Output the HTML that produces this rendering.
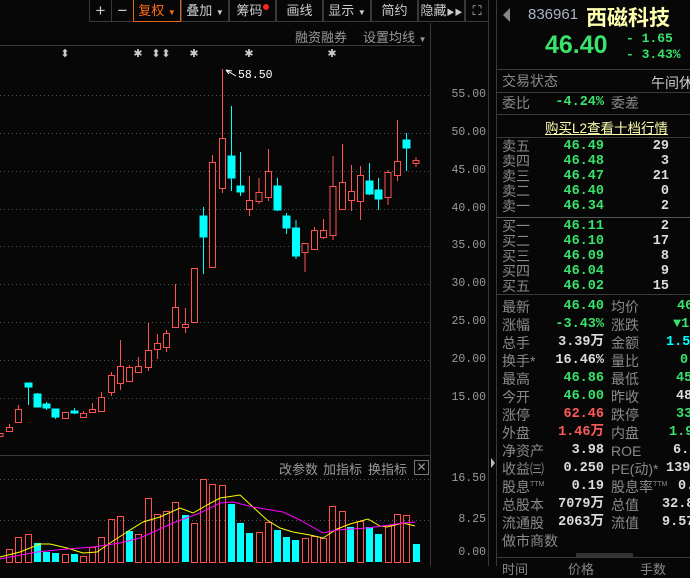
<!DOCTYPE html>
<html><head><meta charset="utf-8"><style>
*{margin:0;padding:0;box-sizing:border-box}
body{width:690px;height:566px;background:#070707;overflow:hidden;position:relative;font-family:"Liberation Sans","Noto Sans CJK SC",sans-serif;color:#bbb}
.a{position:absolute;white-space:nowrap}
.tb{position:absolute;top:0;height:22px;border:1px solid #3a3a3a;border-top:none;color:#ccc;font-size:13px;line-height:21px;text-align:center;white-space:nowrap;overflow:hidden}
.lb{position:absolute;left:502px;font-size:14px;color:#8a8a8a;line-height:16px;white-space:nowrap}
.v{position:absolute;font-size:13.5px;font-weight:bold;line-height:16px;text-align:right;font-family:"Liberation Mono","Noto Sans CJK SC",monospace;white-space:nowrap}
.g{color:#39e26a}.r{color:#ff5a5a}.w{color:#ddd}.c{color:#00ffff}
.ax{position:absolute;left:436px;width:50px;text-align:right;font-size:11.5px;color:#9a9a9a;font-family:"Liberation Mono",monospace;line-height:12px}
sup{font-size:7px;line-height:0;vertical-align:6px}
</style></head><body>
<div class="tb" style="left:89px;width:23px;font-size:17px">+</div>
<div class="tb" style="left:111px;width:23px;font-size:17px">−</div>
<div class="tb" style="left:133px;width:48px;border:1px solid #e8650f;border-top:none;color:#ff6a1a">复权 <span style="font-size:8px">▼</span></div>
<div class="tb" style="left:181px;width:48px">叠加 <span style="font-size:8px">▼</span></div>
<div class="tb" style="left:229px;width:47px">筹码<span style="display:inline-block;width:6px;height:6px;border-radius:3px;background:#f22;vertical-align:top;margin-top:4px"></span></div>
<div class="tb" style="left:276px;width:47px">画线</div>
<div class="tb" style="left:323px;width:48px">显示 <span style="font-size:8px">▼</span></div>
<div class="tb" style="left:371px;width:47px">简约</div>
<div class="tb" style="left:418px;width:47px">隐藏<span style="font-size:8px">▶▶</span></div>
<div class="tb" style="left:465px;width:24px;font-size:13px">⛶</div>
<div class="a" style="left:295px;top:27px;font-size:13px;color:#999">融资融券</div>
<div class="a" style="left:363px;top:27px;font-size:13px;color:#999">设置均线 <span style="font-size:8px">▼</span></div>
<div class="a" style="left:279px;top:459px;font-size:13px;color:#999">改参数</div>
<div class="a" style="left:323px;top:459px;font-size:13px;color:#999">加指标</div>
<div class="a" style="left:368px;top:459px;font-size:13px;color:#999">换指标</div>
<div class="a" style="left:414px;top:460px;width:15px;height:15px;border:1px solid #777;color:#999;font-size:12px;line-height:13px;text-align:center">✕</div>
<div class="ax" style="top:89px">55.00</div><div class="ax" style="top:127px">50.00</div><div class="ax" style="top:165px">45.00</div><div class="ax" style="top:203px">40.00</div><div class="ax" style="top:240px">35.00</div><div class="ax" style="top:278px">30.00</div><div class="ax" style="top:316px">25.00</div><div class="ax" style="top:354px">20.00</div><div class="ax" style="top:392px">15.00</div>
<div class="ax" style="top:473px">16.50</div><div class="ax" style="top:514px">8.25</div><div class="ax" style="top:547px">0.00</div>
<svg class="a" style="left:0;top:0" width="497" height="566">
<g stroke="#3a3a3a" fill="none">
<line x1="0" y1="45.5" x2="421" y2="45.5"/><line x1="430.5" y1="23" x2="430.5" y2="566"/>
<line x1="488.5" y1="0" x2="488.5" y2="566"/><line x1="0" y1="455.5" x2="430" y2="455.5"/>
</g>
<polygon points="491,458 495,463 491,468" fill="#bbb"/>
<g stroke="#555" stroke-dasharray="1,3"><line x1="0" y1="95.5" x2="430" y2="95.5"/><line x1="0" y1="133.5" x2="430" y2="133.5"/><line x1="0" y1="171.5" x2="430" y2="171.5"/><line x1="0" y1="209.5" x2="430" y2="209.5"/><line x1="0" y1="246.5" x2="430" y2="246.5"/><line x1="0" y1="284.5" x2="430" y2="284.5"/><line x1="0" y1="322.5" x2="430" y2="322.5"/><line x1="0" y1="360.5" x2="430" y2="360.5"/><line x1="0" y1="398.5" x2="430" y2="398.5"/><line x1="0" y1="479.5" x2="430" y2="479.5"/><line x1="0" y1="520.5" x2="430" y2="520.5"/></g>
<g fill="#ccc" font-size="11" font-family="Liberation Sans,sans-serif" text-anchor="middle"><text x="65" y="57">⬍</text><text x="138" y="57">✱</text><text x="156" y="57">⬍</text><text x="166" y="57">⬍</text><text x="194" y="57">✱</text><text x="249" y="57">✱</text><text x="332" y="57">✱</text></g>
<path d="M226,70 L232,71 M226,70 L229,74 M226,70 L236,76" stroke="#fff" fill="none"/>
<text x="238" y="78" fill="#fff" font-size="11.5" font-family="Liberation Mono,monospace">58.50</text>
<g stroke="#ff5050" fill="#070707">
<line x1="1" y1="433" x2="1" y2="436"/><rect x="-2" y="433.5" width="5" height="3"/>
<line x1="9.5" y1="424" x2="9.5" y2="431"/><rect x="6.5" y="427.5" width="6" height="4"/>
<line x1="18.5" y1="405" x2="18.5" y2="423"/><rect x="15.5" y="409.5" width="6" height="13"/>
<rect x="62.5" y="412.5" width="6" height="6"/>
<line x1="83.5" y1="411" x2="83.5" y2="417"/><rect x="80.5" y="413.5" width="6" height="4"/>
<line x1="92.5" y1="403" x2="92.5" y2="412"/><rect x="89.5" y="409.5" width="6" height="3"/>
<line x1="101.5" y1="392" x2="101.5" y2="411"/><rect x="98.5" y="397.5" width="6" height="14"/>
<line x1="111.5" y1="372" x2="111.5" y2="396"/><rect x="108.5" y="375.5" width="6" height="17"/>
<line x1="120.5" y1="340" x2="120.5" y2="390"/><rect x="117.5" y="366.5" width="6" height="17"/>
<line x1="129.5" y1="365" x2="129.5" y2="381"/><rect x="126.5" y="367.5" width="6" height="14"/>
<line x1="138.5" y1="357" x2="138.5" y2="372"/><rect x="135.5" y="366.5" width="6" height="6"/>
<line x1="148.5" y1="323" x2="148.5" y2="371"/><rect x="145.5" y="350.5" width="6" height="17"/>
<line x1="157.5" y1="334" x2="157.5" y2="359"/><rect x="154.5" y="343.5" width="6" height="6"/>
<line x1="166.5" y1="330" x2="166.5" y2="352"/><rect x="163.5" y="333.5" width="6" height="14"/>
<line x1="175.5" y1="284" x2="175.5" y2="327"/><rect x="172.5" y="307.5" width="6" height="20"/>
<line x1="185.5" y1="308" x2="185.5" y2="333"/><rect x="182.5" y="324.5" width="6" height="3"/>
<rect x="191.5" y="268.5" width="6" height="54"/>
<line x1="212.5" y1="155" x2="212.5" y2="267"/><rect x="209.5" y="162.5" width="6" height="105"/>
<line x1="222.5" y1="69" x2="222.5" y2="193"/><rect x="219.5" y="138.5" width="6" height="50"/>
<line x1="249.5" y1="176" x2="249.5" y2="216"/><rect x="246.5" y="200.5" width="6" height="9"/>
<line x1="259" y1="178" x2="259" y2="204"/><rect x="256" y="192.5" width="6" height="9"/>
<line x1="268.5" y1="149" x2="268.5" y2="201"/><rect x="265.5" y="171.5" width="6" height="26"/>
<line x1="305" y1="243" x2="305" y2="272"/><rect x="302" y="243.5" width="6" height="9"/>
<line x1="314.5" y1="227" x2="314.5" y2="249"/><rect x="311.5" y="230.5" width="6" height="19"/>
<line x1="323.5" y1="219" x2="323.5" y2="239"/><rect x="320.5" y="230.5" width="6" height="7"/>
<line x1="333" y1="156" x2="333" y2="240"/><rect x="330" y="186.5" width="6" height="49"/>
<line x1="342.5" y1="144" x2="342.5" y2="209"/><rect x="339.5" y="182.5" width="6" height="27"/>
<line x1="351.5" y1="165" x2="351.5" y2="211"/><rect x="348.5" y="191.5" width="6" height="9"/>
<line x1="360.5" y1="166" x2="360.5" y2="220"/><rect x="357.5" y="175.5" width="6" height="26"/>
<line x1="388" y1="170" x2="388" y2="205"/><rect x="385" y="172.5" width="6" height="25"/>
<line x1="397.5" y1="120" x2="397.5" y2="181"/><rect x="394.5" y="161.5" width="6" height="14"/>
<line x1="416" y1="157" x2="416" y2="167"/><rect x="413" y="160.5" width="6" height="3"/>
</g>
<g stroke="#00ffff" fill="#00ffff">
<line x1="28.5" y1="383" x2="28.5" y2="405"/><rect x="25" y="383" width="7" height="4"/>
<line x1="37.5" y1="393" x2="37.5" y2="407"/><rect x="34" y="394" width="7" height="13"/>
<line x1="46.5" y1="402" x2="46.5" y2="410"/><rect x="43" y="404" width="7" height="4"/>
<line x1="55.5" y1="409" x2="55.5" y2="419"/><rect x="52" y="409" width="7" height="8"/>
<line x1="74.5" y1="408" x2="74.5" y2="414"/><rect x="71" y="411" width="7" height="2"/>
<line x1="203.5" y1="207" x2="203.5" y2="274"/><rect x="200" y="216" width="7" height="21"/>
<line x1="231.5" y1="106" x2="231.5" y2="191"/><rect x="228" y="156" width="7" height="22"/>
<line x1="240.5" y1="152" x2="240.5" y2="196"/><rect x="237" y="186" width="7" height="6"/>
<line x1="277.5" y1="178" x2="277.5" y2="211"/><rect x="274" y="186" width="7" height="24"/>
<line x1="286.5" y1="213" x2="286.5" y2="234"/><rect x="283" y="216" width="7" height="12"/>
<line x1="296" y1="220" x2="296" y2="259"/><rect x="292.5" y="228" width="7" height="28"/>
<line x1="369.5" y1="163" x2="369.5" y2="195"/><rect x="366" y="181" width="7" height="13"/>
<line x1="378.5" y1="178" x2="378.5" y2="210"/><rect x="375" y="190" width="7" height="9"/>
<line x1="406.5" y1="133" x2="406.5" y2="171"/><rect x="403" y="140" width="7" height="8"/>
</g>
<g stroke="#ff5050" fill="none">
<rect x="6.5" y="549.5" width="6" height="13"/><rect x="15.5" y="537.5" width="6" height="25"/><rect x="25.5" y="534.5" width="6" height="28"/>
<rect x="62.5" y="554.5" width="6" height="8"/><rect x="80.5" y="556.5" width="6" height="6"/><rect x="89.5" y="547.5" width="6" height="15"/>
<rect x="98.5" y="537.5" width="6" height="25"/><rect x="108.5" y="519.5" width="6" height="43"/><rect x="117.5" y="516.5" width="6" height="46"/>
<rect x="135.5" y="534.5" width="6" height="28"/><rect x="145.5" y="498.5" width="6" height="64"/><rect x="154.5" y="514.5" width="6" height="48"/>
<rect x="163.5" y="511.5" width="6" height="51"/><rect x="172.5" y="502.5" width="6" height="60"/><rect x="191.5" y="523.5" width="6" height="39"/>
<rect x="200.5" y="479.5" width="6" height="83"/><rect x="209.5" y="484.5" width="6" height="78"/><rect x="219.5" y="485.5" width="6" height="77"/>
<rect x="256.5" y="532.5" width="6" height="30"/><rect x="265.5" y="522.5" width="6" height="40"/>
<rect x="302.5" y="538.5" width="6" height="24"/><rect x="311.5" y="536.5" width="6" height="26"/><rect x="320.5" y="538.5" width="6" height="24"/>
<rect x="329.5" y="506.5" width="6" height="56"/><rect x="339.5" y="511.5" width="6" height="51"/><rect x="357.5" y="521.5" width="6" height="41"/>
<rect x="385.5" y="525.5" width="6" height="37"/><rect x="394.5" y="514.5" width="6" height="48"/><rect x="403.5" y="515.5" width="6" height="47"/>
</g>
<g fill="#00ffff">
<rect x="34" y="543" width="7" height="19"/><rect x="43" y="552" width="7" height="10"/><rect x="52" y="553" width="7" height="9"/>
<rect x="71" y="554" width="7" height="8"/><rect x="126" y="531" width="7" height="31"/><rect x="182" y="515" width="7" height="47"/>
<rect x="228" y="504" width="7" height="58"/><rect x="237" y="523" width="7" height="39"/><rect x="246" y="533" width="7" height="29"/>
<rect x="274" y="530" width="7" height="32"/><rect x="283" y="537" width="7" height="25"/><rect x="292" y="540" width="7" height="22"/>
<rect x="347" y="527" width="7" height="35"/><rect x="366" y="527" width="7" height="35"/><rect x="375" y="534" width="7" height="28"/>
<rect x="413" y="544" width="7" height="18"/>
</g>
<polyline fill="none" stroke="#ffff00" points="0,557 20,552 40,544 50,544 67,548 83,553 97,552 110,543 127,532 143,522 160,517 180,508 193,513 207,505 220,498 240,495 253,507 267,520 280,528 293,532 310,535 323,538 337,529 350,524 368,519 380,526 387,527 403,523 415,526"/>
<polyline fill="none" stroke="#ff00ff" points="0,559 37,552 67,549 93,547 120,543 140,538 173,523 200,513 220,503 233,502 253,507 283,512 300,520 323,533 337,530 367,528 390,525 403,523 415,522"/>
</svg>
<div class="a" style="left:496px;top:0;width:1px;height:566px;background:#3a3a3a"></div>
<svg class="a" style="left:503px;top:8px" width="8" height="15"><polygon points="7,0 0,7 7,14" fill="#888"/></svg>
<div class="a" style="left:528px;top:6px;font-size:15px;color:#aab4c4">836961</div>
<div class="a" style="left:586px;top:2px;font-size:21px;font-weight:bold;color:#ffffb0">西磁科技</div>
<div class="a g" style="left:545px;top:31px;font-size:25px;font-weight:bold">46.40</div>
<div class="a g" style="left:626px;top:31px;font-size:13px;font-weight:bold;font-family:'Liberation Mono',monospace">- 1.65</div>
<div class="a g" style="left:626px;top:47px;font-size:13px;font-weight:bold;font-family:'Liberation Mono',monospace">- 3.43%</div>
<div class="a" style="left:497px;top:69px;width:193px;height:1px;background:#3a3a3a"></div>
<div class="lb" style="top:73px">交易状态</div><div class="a" style="left:651px;top:73px;font-size:14px;color:#ccc">午间休</div>
<div class="a" style="left:497px;top:92px;width:193px;height:1px;background:#3a3a3a"></div>
<div class="lb" style="top:95px">委比</div><div class="v g" style="left:540px;top:95px;width:64px">-4.24%</div><div class="lb" style="left:611px;top:95px">委差</div>
<div class="a" style="left:497px;top:114px;width:193px;height:1px;background:#3a3a3a"></div>
<div class="a" style="left:545px;top:117px;font-size:13.5px;color:#ffffb0;text-decoration:underline">购买L2查看十档行情</div>
<div class="a" style="left:497px;top:137px;width:193px;height:1px;background:#3a3a3a"></div>
<div class="lb" style="top:139px;line-height:15px">卖五<br>卖四<br>卖三<br>卖二<br>卖一</div>
<div class="v g" style="left:550px;top:139px;width:54px;line-height:15px">46.49<br>46.48<br>46.47<br>46.40<br>46.34</div>
<div class="v w" style="left:630px;top:139px;width:39px;line-height:15px">29<br>3<br>21<br>0<br>2</div>
<div class="a" style="left:497px;top:217px;width:193px;height:1px;background:#555"></div>
<div class="lb" style="top:219px;line-height:15px">买一<br>买二<br>买三<br>买四<br>买五</div>
<div class="v g" style="left:550px;top:219px;width:54px;line-height:15px">46.11<br>46.10<br>46.09<br>46.04<br>46.02</div>
<div class="v w" style="left:630px;top:219px;width:39px;line-height:15px">2<br>17<br>8<br>9<br>15</div>
<div class="a" style="left:497px;top:294px;width:193px;height:1px;background:#3a3a3a"></div>
<div class="lb" style="top:298px;line-height:18px">最新<br>涨幅<br>总手<br>换手*<br>最高<br>今开<br>涨停<br>外盘<br>净资产<br>收益㈢<br>股息<sup>TTM</sup><br>总股本<br>流通股<br>做市商数</div>
<div class="v" style="left:530px;top:298px;width:74px;line-height:18px"><span class="g">46.40</span><br><span class="g">-3.43%</span><br><span class="w">3.39万</span><br><span class="w">16.46%</span><br><span class="g">46.86</span><br><span class="g">46.00</span><br><span class="r">62.46</span><br><span class="r">1.46万</span><br><span class="w">3.98</span><br><span class="w">0.250</span><br><span class="w">0.19</span><br><span class="w">7079万</span><br><span class="w">2063万</span></div>
<div class="lb" style="left:611px;top:298px;line-height:18px">均价<br>涨跌<br>金额<br>量比<br>最低<br>昨收<br>跌停<br>内盘<br>ROE<br>PE(动)*<br>股息率<sup>TTM</sup><br>总值<br>流值</div>
<div class="v" style="left:640px;top:298px;width:60px;line-height:18px;text-align:left"><span class="g" style="margin-left:37px">46.</span><br><span class="g" style="margin-left:33px">▼1.</span><br><span class="c" style="margin-left:26px">1.57</span><br><span class="g" style="margin-left:40px">0.</span><br><span class="g" style="margin-left:36px">45.</span><br><span class="w" style="margin-left:36px">48.</span><br><span class="g" style="margin-left:36px">33.</span><br><span class="g" style="margin-left:29px">1.93</span><br><span class="w" style="margin-left:33px">6.3</span><br><span class="w" style="margin-left:26px">139.</span><br><span class="w" style="margin-left:38px">0.4</span><br><span class="w" style="margin-left:22px">32.85</span><br><span class="w" style="margin-left:22px">9.571</span></div>
<div class="a" style="left:576px;top:553px;width:57px;height:4px;background:#333"></div>
<div class="a" style="left:497px;top:557px;width:193px;height:1px;background:#3a3a3a"></div>
<div class="a" style="left:502px;top:559px;font-size:13px;color:#888">时间</div>
<div class="a" style="left:568px;top:559px;font-size:13px;color:#888">价格</div>
<div class="a" style="left:640px;top:559px;font-size:13px;color:#888">手数</div>
</body></html>
